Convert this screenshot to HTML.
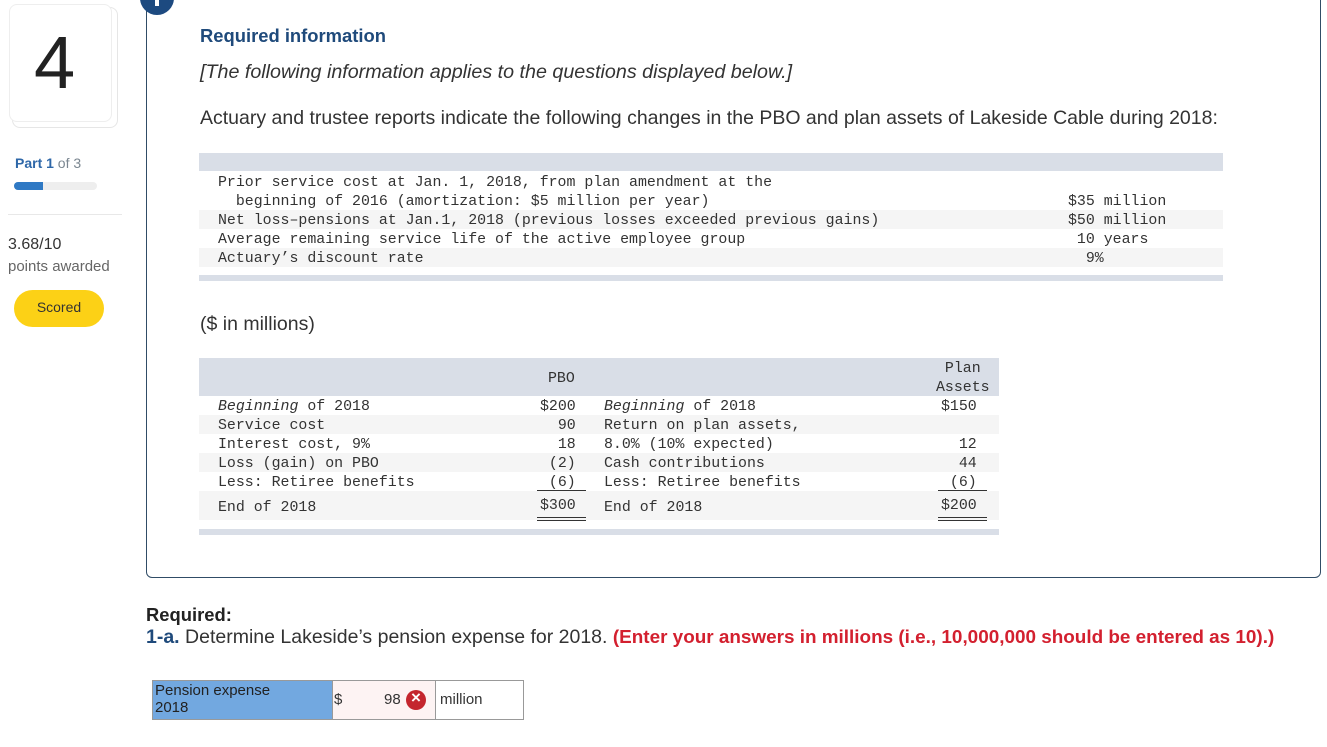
<!DOCTYPE html>
<html><head><style>
body{margin:0;width:1327px;height:747px;background:#fff;position:relative;overflow:hidden;font-family:"Liberation Sans",sans-serif;color:#333}
.a{position:absolute;white-space:pre}
.m{font-family:"Liberation Mono",monospace;font-size:14.9px;color:#333;line-height:19px}
.bg{position:absolute}
</style></head><body>
<!-- left sidebar -->
<div class="bg" style="left:12px;top:7px;width:104px;height:119px;border:1px solid #e6e6e6;border-radius:8px"></div>
<div class="bg" style="left:9px;top:4px;width:101px;height:116px;border:1px solid #eee;border-radius:8px;background:#fff"></div>
<div class="a" style="left:34px;top:20px;font-size:74px;color:#222;line-height:86px">4</div>
<div class="a" style="left:15px;top:155px;font-size:14px;color:#7a8690"><b style="color:#2e67a8">Part 1</b> of 3</div>
<div class="bg" style="left:14px;top:182px;width:83px;height:8px;background:#eee;border-radius:4px"></div>
<div class="bg" style="left:14px;top:182px;width:29px;height:8px;background:#2f79c4;border-radius:4px 0 0 4px"></div>
<div class="bg" style="left:8px;top:214px;width:114px;height:1px;background:#e8e8e8"></div>
<div class="a" style="left:8px;top:236px;font-size:16px;color:#333">3.68/10</div>
<div class="a" style="left:8px;top:258px;font-size:15px;color:#666">points awarded</div>
<div class="bg" style="left:14px;top:290px;width:90px;height:37px;background:#fcd116;border-radius:19px"></div>
<div class="a" style="left:14px;top:299px;width:90px;text-align:center;font-size:14px;color:#333">Scored</div>

<!-- box -->
<div class="bg" style="left:146px;top:-10px;width:1173px;height:586px;border:1px solid #304c66;border-radius:0 0 6px 6px"></div>
<div class="bg" style="left:140px;top:-19px;width:34px;height:34px;border-radius:50%;background:#1d4a80"></div>
<div class="bg" style="left:155px;top:0px;width:4px;height:6px;background:#fff"></div>
<div class="a" style="left:200px;top:25px;font-size:18.4px;font-weight:bold;color:#1f4a7b">Required information</div>
<div class="a" style="left:200px;top:61px;font-size:19.7px;font-style:italic;color:#333">[The following information applies to the questions displayed below.]</div>
<div class="a" style="left:200px;top:107px;font-size:19.5px;color:#333">Actuary and trustee reports indicate the following changes in the PBO and plan assets of Lakeside Cable during 2018:</div>

<!-- table 1 -->
<div class="bg" style="left:199px;top:153px;width:1024px;height:18px;background:#d9dee7"></div>
<div class="bg" style="left:199px;top:210px;width:1024px;height:19px;background:#f5f5f5"></div>
<div class="bg" style="left:199px;top:248px;width:1024px;height:19px;background:#f5f5f5"></div>
<div class="bg" style="left:199px;top:275px;width:1024px;height:6px;background:#d9dee7"></div>
<div class="a m" style="left:218px;top:174px">Prior service cost at Jan. 1, 2018, from plan amendment at the
  beginning of 2016 (amortization: $5 million per year)
Net loss–pensions at Jan.1, 2018 (previous losses exceeded previous gains)
Average remaining service life of the active employee group
Actuary’s discount rate</div>
<div class="a m" style="left:1068px;top:193px">$35 million
$50 million
 10 years
  9%</div>

<div class="a" style="left:200px;top:313px;font-size:19.5px">($ in millions)</div>

<!-- table 2 -->
<div class="bg" style="left:199px;top:358px;width:800px;height:38px;background:#d9dee7"></div>
<div class="bg" style="left:199px;top:415px;width:800px;height:19px;background:#f5f5f5"></div>
<div class="bg" style="left:199px;top:453px;width:800px;height:19px;background:#f5f5f5"></div>
<div class="bg" style="left:199px;top:491px;width:800px;height:29px;background:#f5f5f5"></div>
<div class="bg" style="left:199px;top:529px;width:800px;height:6px;background:#d9dee7"></div>
<div class="a m" style="left:548px;top:370px">PBO</div>
<div class="a m" style="left:936px;top:360px"> Plan
Assets</div>
<div class="a m" style="left:218px;top:398px"><i>Beginning</i> of 2018
Service cost
Interest cost, 9%
Loss (gain) on PBO
Less: Retiree benefits</div>
<div class="a m" style="left:218px;top:499px">End of 2018</div>
<div class="a m" style="left:540px;top:398px">$200
  90
  18
 (2)
 (6)</div>
<div class="a m" style="left:540px;top:497px">$300</div>
<div class="a m" style="left:604px;top:398px"><i>Beginning</i> of 2018
Return on plan assets,
8.0% (10% expected)
Cash contributions
Less: Retiree benefits</div>
<div class="a m" style="left:604px;top:499px">End of 2018</div>
<div class="a m" style="left:941px;top:398px">$150

  12
  44
 (6)</div>
<div class="a m" style="left:941px;top:497px">$200</div>
<div class="bg" style="left:537px;top:490px;width:49px;height:1px;background:#333"></div>
<div class="bg" style="left:537px;top:517px;width:49px;height:1px;background:#333"></div>
<div class="bg" style="left:537px;top:520px;width:49px;height:1px;background:#333"></div>
<div class="bg" style="left:938px;top:490px;width:49px;height:1px;background:#333"></div>
<div class="bg" style="left:938px;top:517px;width:49px;height:1px;background:#333"></div>
<div class="bg" style="left:938px;top:520px;width:49px;height:1px;background:#333"></div>

<!-- required -->
<div class="a" style="left:146px;top:604px;font-size:18.4px;font-weight:bold;color:#222">Required:</div>
<div class="a" style="left:146px;top:626px;font-size:19.5px;color:#333"><b style="color:#1f4a7b">1-a.</b> Determine Lakeside’s pension expense for 2018. <b style="color:#d3202f;font-size:18.9px">(Enter your answers in millions (i.e., 10,000,000 should be entered as 10).)</b></div>

<div class="bg" style="left:152px;top:680px;width:370px;height:38px;border:1px solid #999"></div>
<div class="bg" style="left:153px;top:681px;width:179px;height:38px;background:#72a8e0;border-right:1px solid #999"></div>
<div class="a" style="left:155px;top:682px;font-size:15px;line-height:17px;color:#222">Pension expense
2018</div>
<div class="bg" style="left:333px;top:681px;width:102px;height:38px;background:#fdf3f3;border-right:1px solid #999"></div>
<div class="a" style="left:334px;top:691px;font-size:15px;color:#333">$</div>
<div class="a" style="left:384px;top:691px;font-size:15px;color:#333">98</div>
<div class="bg" style="left:406px;top:690px;width:20px;height:20px;border-radius:50%;background:#c4262e"></div>
<div class="a" style="left:406px;top:688px;width:20px;text-align:center;font-size:17px;font-weight:bold;color:#fff">×</div>
<div class="a" style="left:440px;top:691px;font-size:15px;color:#333">million</div>
</body></html>
